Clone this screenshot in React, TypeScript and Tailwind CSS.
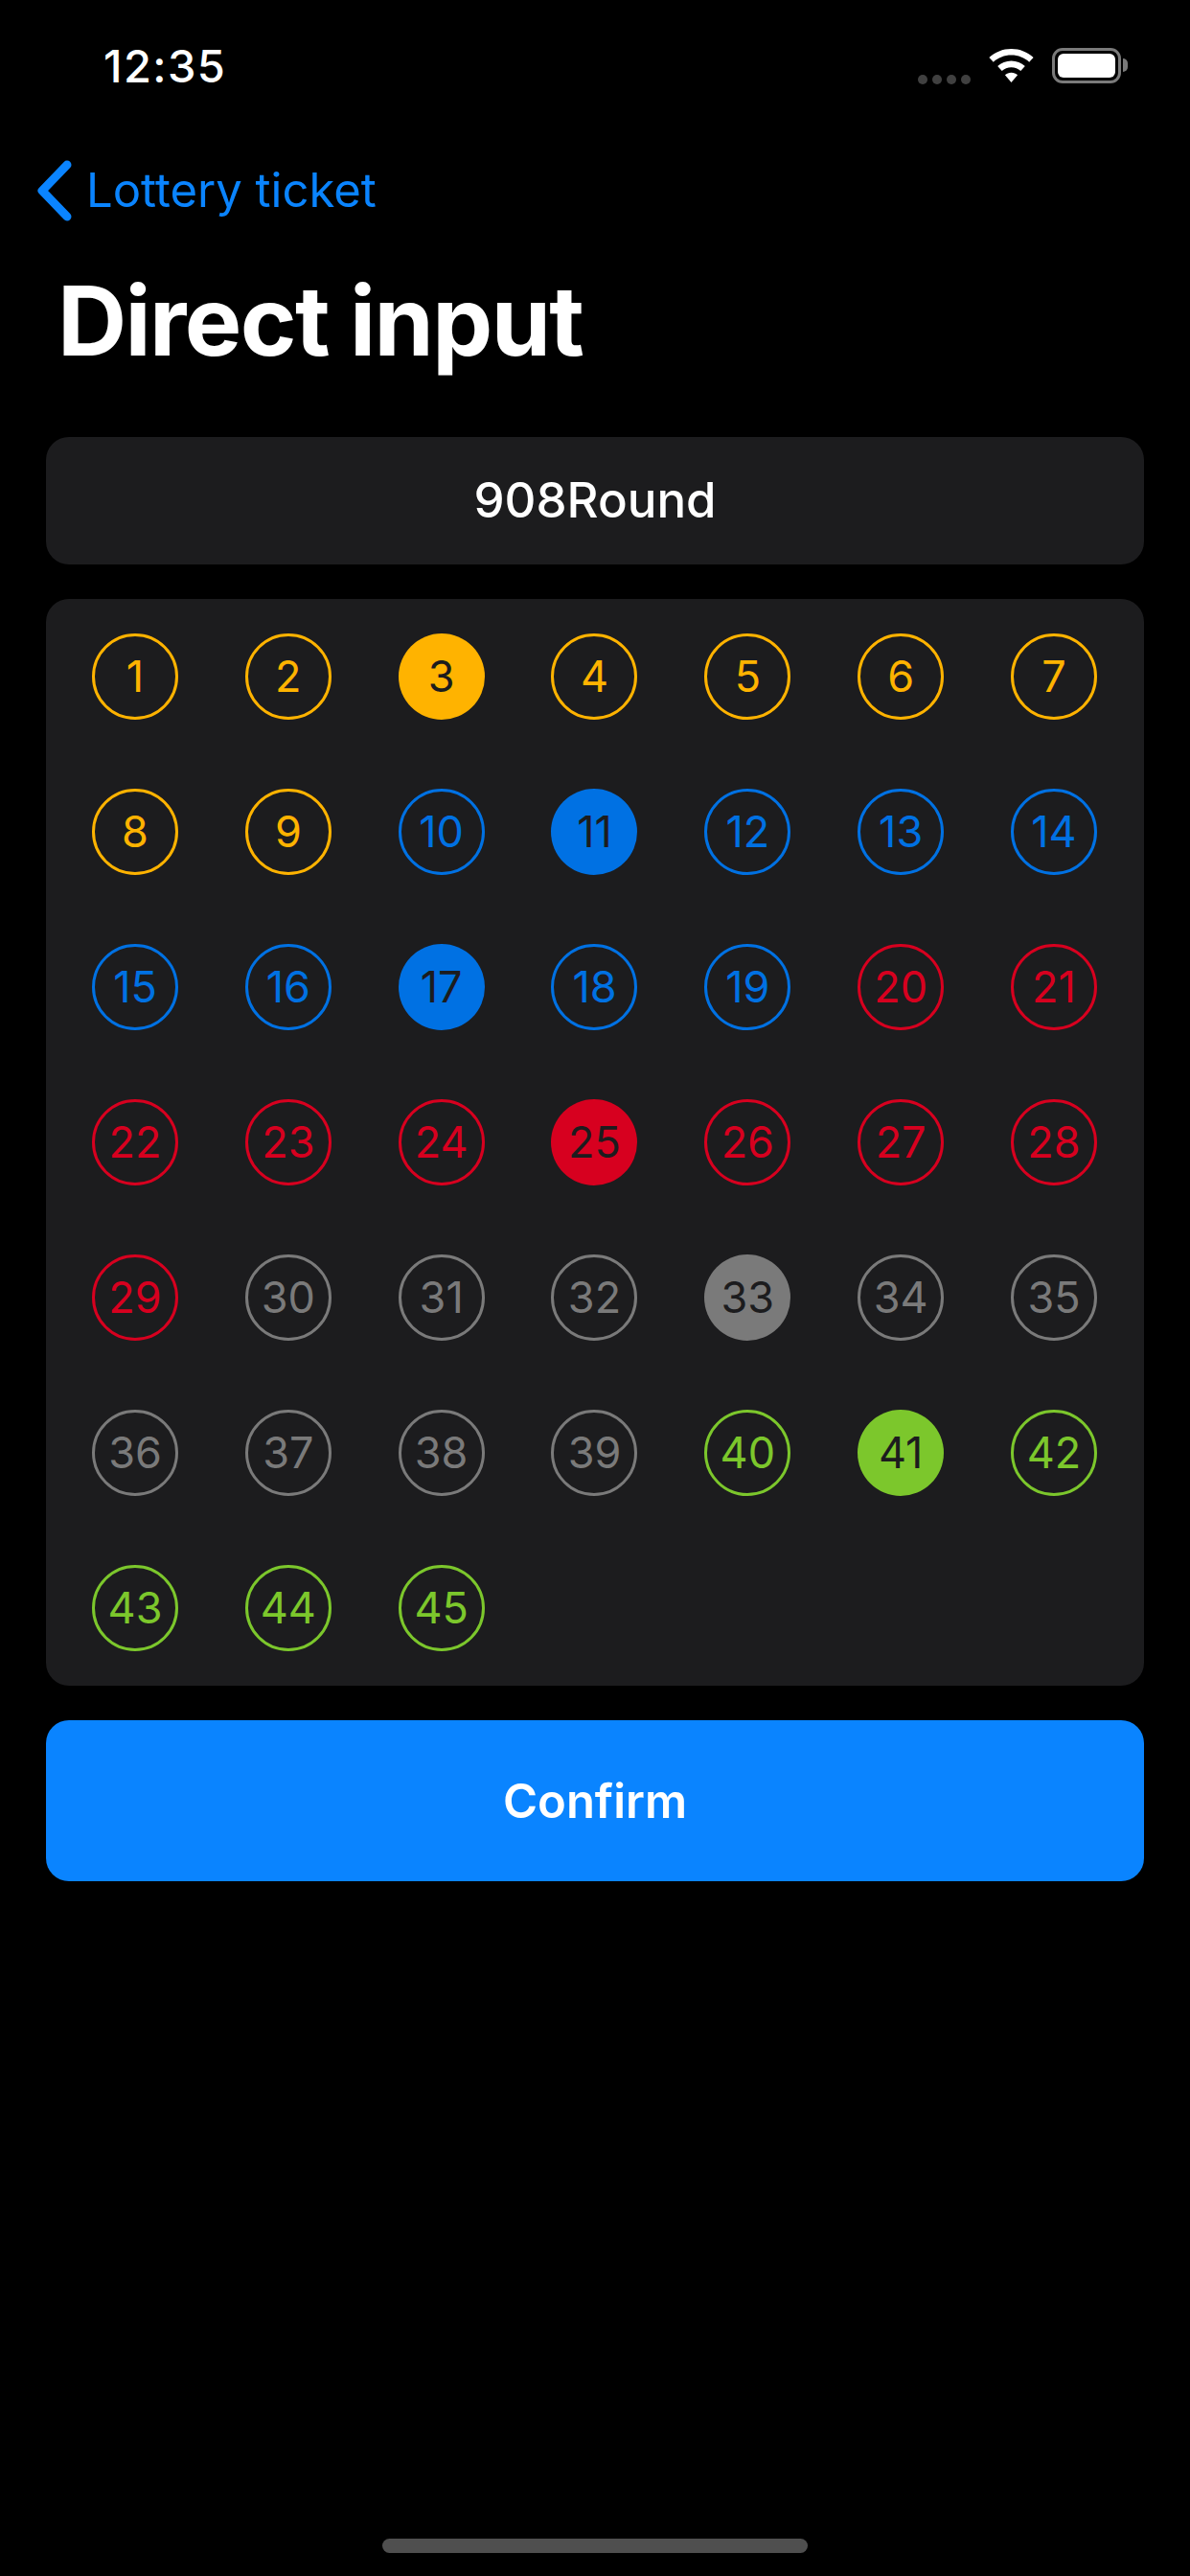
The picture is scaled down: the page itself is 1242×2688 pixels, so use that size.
const groups = [
  { to: 9, text: "text-[#ffb300]", border: "border-[#ffb300]", fill: "bg-[#ffb300]" },
  { to: 19, text: "text-[#0071e3]", border: "border-[#0071e3]", fill: "bg-[#0071e3]" },
  { to: 29, text: "text-[#d7001f]", border: "border-[#d7001f]", fill: "bg-[#d7001f]" },
  { to: 39, text: "text-[#7a7a7a]", border: "border-[#7a7a7a]", fill: "bg-[#7a7a7a]" },
  { to: 45, text: "text-[#7cc72c]", border: "border-[#7cc72c]", fill: "bg-[#7cc72c]" },
];

const picked = [3, 11, 17, 25, 33, 41];
const numbers = Array.from({ length: 45 }, (_, i) => i + 1);

function Ball({ n }: { n: number }) {
  const g = groups.find((x) => n <= x.to)!;
  const on = picked.includes(n);
  return (
    <div
      className={`flex h-[90px] w-[90px] items-center justify-center rounded-full text-[45px] font-normal ${
        on ? `${g.fill} text-[#1c1c1e]` : `border-[3px] ${g.border} ${g.text}`
      }`}
    >
      {n}
    </div>
  );
}

function StatusBar() {
  return (
    <div className="flex h-[136px] items-center justify-between pl-[108px] pr-[65px]">
      <span className="text-[47px] font-medium leading-none tracking-[1.4px] text-white">12:35</span>
      <div className="flex items-center">
        <div className="mt-[30px] flex gap-[5px]">
          <span className="h-[10px] w-[10px] rounded-full bg-[#404040]" />
          <span className="h-[10px] w-[10px] rounded-full bg-[#404040]" />
          <span className="h-[10px] w-[10px] rounded-full bg-[#404040]" />
          <span className="h-[10px] w-[10px] rounded-full bg-[#404040]" />
        </div>
        <svg className="ml-[19px]" width="47" height="35" viewBox="0 0 47 35" fill="white">
          <path d="M23.5 0C14.6 0 6.5 3.4 0.4 9l4.4 4.8C9.7 9.300 16.300 6.600 23.500 6.600s13.800 2.700 18.700 7.200L46.600 9C40.500 3.400 32.400 0 23.500 0z" />
          <path d="M23.500 12.500c-5.500 0-10.500 2.100-14.300 5.500l4.500 4.900c2.600-2.300 6-3.700 9.800-3.700s7.200 1.400 9.800 3.700l4.500-4.900C34 14.600 29 12.500 23.500 12.500z" />
          <path d="M23.500 24.800c-2.500 0-4.800 0.900-6.600 2.500L23.500 35l6.600-7.700c-1.800-1.600-4.100-2.500-6.600-2.500z" />
        </svg>
        <div className="ml-[19px] flex items-center">
          <div className="flex h-[37px] w-[72px] rounded-[11px] border-[3px] border-[#7a7a7a] p-[3px]">
            <div className="flex-1 rounded-[6px] bg-white" />
          </div>
          <div className="ml-[2px] h-[14px] w-[5px] rounded-r-full bg-[#7a7a7a]" />
        </div>
      </div>
    </div>
  );
}

export default function App() {
  return (
    <div className="flex min-h-[2688px] w-[1242px] flex-col bg-black font-['Inter',sans-serif]">
      <StatusBar />

      <div className="flex h-[126px] items-center pl-[39px]">
        <svg width="36" height="64" viewBox="0 0 36 64" fill="none">
          <path d="M31 5 5 32l26 27" stroke="#0a84ff" strokeWidth="9" strokeLinecap="round" strokeLinejoin="round" />
        </svg>
        <span className="mb-[2px] ml-[15px] text-[49px] leading-none text-[#0a84ff]">Lottery ticket</span>
      </div>

      <h1 className="flex h-[146px] items-center pl-[60px] text-[100px] font-bold leading-none tracking-[-1.6px] text-white">
        Direct input
      </h1>

      <div className="mx-[48px] mt-[48px] flex h-[133px] items-center justify-center rounded-[24px] bg-[#1c1c1e] text-[51px] font-medium text-white">
        908Round
      </div>

      <div className="mx-[48px] mt-[36px] grid grid-cols-[repeat(7,90px)] justify-between gap-y-[72px] rounded-[24px] bg-[#1c1c1e] pb-[36px] pl-[48px] pr-[49px] pt-[36px]">
        {numbers.map((n) => (
          <Ball key={n} n={n} />
        ))}
      </div>

      <button className="mx-[48px] mt-[36px] flex h-[168px] items-center justify-center rounded-[24px] bg-[#0a84ff] pt-[2px] text-[49px] font-semibold text-white">
        Confirm
      </button>

      <div className="mt-auto mb-[24px] h-[15px] w-[444px] self-center rounded-full bg-[#4f4f4f]" />
    </div>
  );
}
